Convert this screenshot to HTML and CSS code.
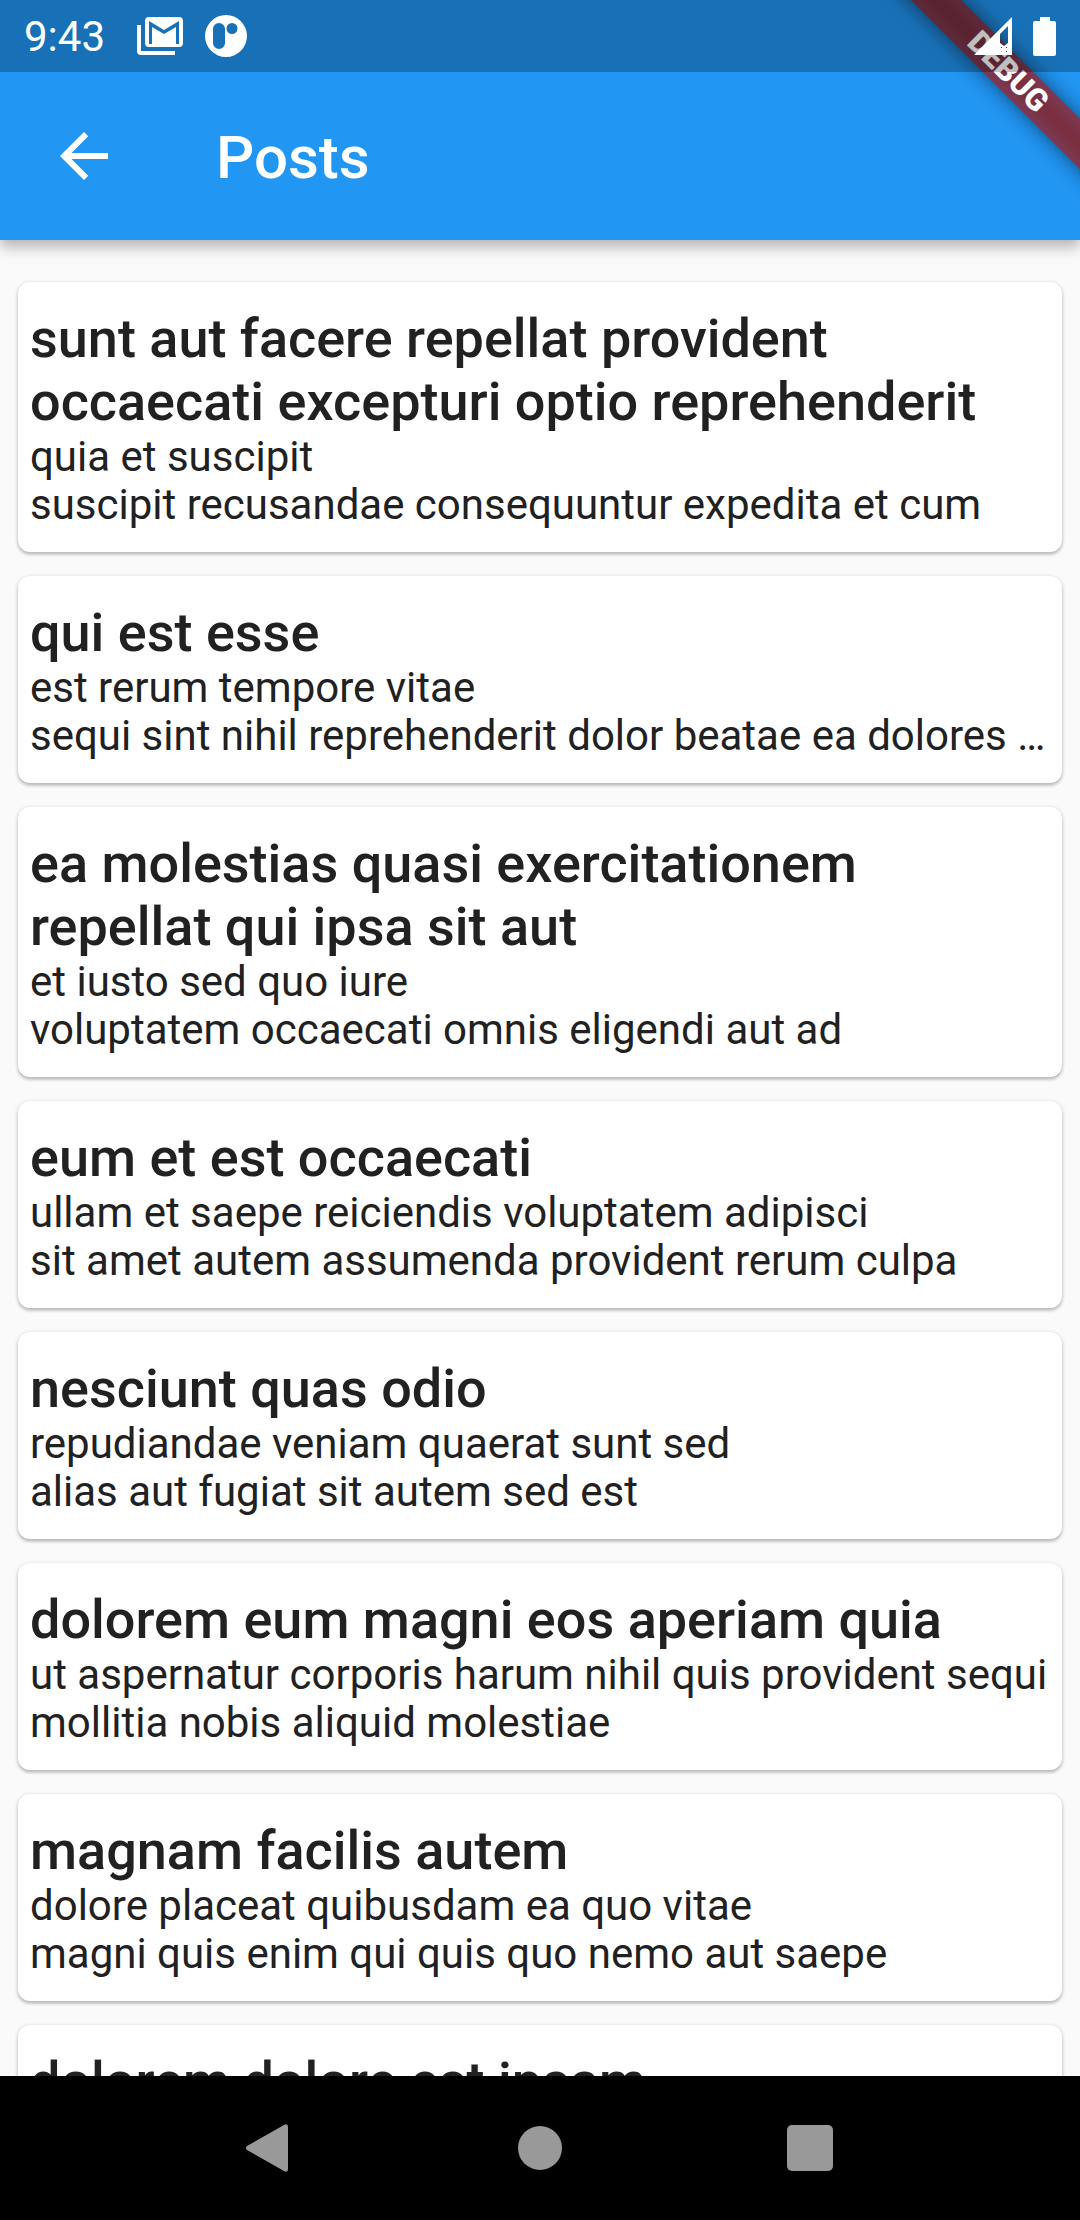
FILE: index.html
```html
<!DOCTYPE html>
<html lang="en">
<head>
<meta charset="utf-8">
<meta name="viewport" content="width=device-width, initial-scale=1">
<title>Posts</title>
<link rel="stylesheet" href="styles.css">
</head>
<body>
<div class="app">
  <header class="top">
    <div class="status-bar">
      <time class="clock">9:43</time>
      <svg class="mail-icon" viewBox="0 0 46 40" width="46" height="40" aria-hidden="true">
        <path fill="#fff" fill-rule="evenodd" d="M12 1h30a4 4 0 0 1 4 4v22a4 4 0 0 1-4 4H12a4 4 0 0 1-4-4V5a4 4 0 0 1 4-4zM12 5v23h3V11l12 7 12-7v17h3V5L27 14z"/>
        <path fill="#fff" d="M0 9h4v26h34v4H4a4 4 0 0 1-4-4z"/>
      </svg>
      <svg class="app-icon" viewBox="0 0 42 42" width="42" height="42" aria-hidden="true">
        <path fill="#fff" fill-rule="evenodd" d="M21 0a21 21 0 1 1 0 42a21 21 0 0 1 0-42zM14 8a6 6 0 0 0-6 6v14a6 6 0 0 0 12 0V14a6 6 0 0 0-6-6zM27 8a5 5 0 1 0 0 11a5 5 0 0 0 0-11z"/>
      </svg>
      <span class="spacer"></span>
      <svg class="signal-icon" viewBox="0 0 38 38" width="38" height="38" aria-hidden="true">
        <path fill="#fff" fill-rule="evenodd" d="M38 0v38H0zM34 9l-8 8v9l4 3 4-3zM27 30h1v1h-1zM32 30h1v1h-1zM27 34h1v1h-1zM32 34h1v1h-1z"/>
      </svg>
      <svg class="battery-icon" viewBox="0 0 24 39" width="24" height="39" aria-hidden="true">
        <path fill="#fff" d="M8 0h10v4h4a2 2 0 0 1 2 2v31a2 2 0 0 1-2 2H3a2 2 0 0 1-2-2V6a2 2 0 0 1 2-2h5z"/>
      </svg>
    </div>
    <div class="app-bar">
      <button class="back" type="button" aria-label="Back">
        <svg viewBox="0 0 24 24" width="72" height="72" aria-hidden="true"><path fill="#fff" d="M20 11H7.83l5.59-5.59L12 4l-8 8 8 8 1.41-1.41L7.83 13H20v-2z"/></svg>
      </button>
      <h1 class="title">Posts</h1>
    </div>
    <div class="banner-corner"><div class="banner">DEBUG</div></div>
  </header>
  <main class="list">
    <article class="card">
      <h2>sunt aut facere repellat provident occaecati excepturi optio reprehenderit</h2>
      <p>quia et suscipit<br>suscipit recusandae consequuntur expedita et cum</p>
    </article>
    <article class="card">
      <h2>qui est esse</h2>
      <p>est rerum tempore vitae<br>sequi sint nihil reprehenderit dolor beatae ea dolores …</p>
    </article>
    <article class="card">
      <h2>ea molestias quasi exercitationem repellat qui ipsa sit aut</h2>
      <p>et iusto sed quo iure<br>voluptatem occaecati omnis eligendi aut ad</p>
    </article>
    <article class="card">
      <h2>eum et est occaecati</h2>
      <p>ullam et saepe reiciendis voluptatem adipisci<br>sit amet autem assumenda provident rerum culpa</p>
    </article>
    <article class="card">
      <h2>nesciunt quas odio</h2>
      <p>repudiandae veniam quaerat sunt sed<br>alias aut fugiat sit autem sed est</p>
    </article>
    <article class="card">
      <h2>dolorem eum magni eos aperiam quia</h2>
      <p>ut aspernatur corporis harum nihil quis provident sequi<br>mollitia nobis aliquid molestiae</p>
    </article>
    <article class="card">
      <h2>magnam facilis autem</h2>
      <p>dolore placeat quibusdam ea quo vitae<br>magni quis enim qui quis quo nemo aut saepe</p>
    </article>
    <article class="card">
      <h2>dolorem dolore est ipsam</h2>
    </article>
  </main>
  <nav class="nav-bar" aria-label="System">
    <button type="button" aria-label="Back"><svg viewBox="0 0 48 48" width="48" height="48" aria-hidden="true"><path fill="#999" d="M1 22L38 1q4-2 4 2v42q0 4-4 2L1 26q-2-2 0-4z"/></svg></button>
    <button type="button" aria-label="Home"><svg viewBox="0 0 48 48" width="48" height="48" aria-hidden="true"><circle cx="24" cy="24" r="22" fill="#999"/></svg></button>
    <button type="button" aria-label="Recent apps"><svg viewBox="0 0 48 48" width="48" height="48" aria-hidden="true"><rect x="1" y="1" width="46" height="46" rx="5" fill="#999"/></svg></button>
  </nav>
</div>
</body>
</html>
```
FILE: styles.css
```css
* {
  box-sizing: border-box;
}

body {
  margin: 0;
  font-family: Roboto, "Liberation Sans", sans-serif;
  color: #212121;
  background: #fafafa;
}

h1,
h2,
p {
  margin: 0;
}

button {
  display: flex;
  align-items: center;
  justify-content: center;
  padding: 0;
  border: 0;
  background: none;
}

.app {
  display: flex;
  flex-direction: column;
  height: 100vh;
}

.top {
  position: relative;
  z-index: 1;
  flex: none;
  color: #fff;
  background: #2196f3;
  box-shadow: 0 6px 12px rgba(0, 0, 0, 0.2), 0 9px 15px rgba(0, 0, 0, 0.1);
}

.status-bar {
  position: relative;
  z-index: 2;
  display: flex;
  align-items: center;
  height: 72px;
  padding: 0 24px;
  background: rgba(0, 0, 0, 0.25);
}

.clock {
  padding-top: 2px;
  font-size: 42px;
  line-height: 48px;
}

.mail-icon {
  margin-left: 32px;
}

.app-icon {
  margin-left: 22px;
}

.spacer {
  flex: 1;
}

.battery-icon {
  margin-left: 20px;
}

.app-bar {
  display: flex;
  align-items: center;
  gap: 48px;
  height: 168px;
}

.back {
  width: 168px;
  height: 168px;
}

.title {
  padding-top: 4px;
  font-size: 60px;
  font-weight: 500;
  line-height: 72px;
}

.banner-corner {
  position: absolute;
  top: 0;
  right: 0;
  z-index: 1;
  width: 240px;
  height: 240px;
  overflow: hidden;
  pointer-events: none;
}

.banner {
  position: absolute;
  top: 54px;
  right: -108px;
  width: 360px;
  height: 36px;
  font-size: 31px;
  font-weight: 900;
  line-height: 36px;
  text-align: center;
  transform: rotate(45deg);
}

.banner::before,
.banner::after {
  content: "";
  position: absolute;
  inset: 0;
}

.banner::before {
  z-index: -2;
  background: rgba(0, 0, 0, 0.5);
  filter: blur(10px);
}

.banner::after {
  z-index: -1;
  background: rgba(183, 28, 28, 0.63);
}

.list {
  display: flex;
  flex: 1;
  flex-direction: column;
  gap: 24px;
  min-height: 0;
  padding: 42px 18px;
  overflow-y: auto;
  scrollbar-width: none;
}

.card {
  flex: none;
  padding: 25px 12px 23px;
  border-radius: 12px;
  background: #fff;
  box-shadow: 0 3px 3px rgba(0, 0, 0, 0.14), 0 1px 4px rgba(0, 0, 0, 0.2);
}

.card h2 {
  font-size: 54px;
  font-weight: 500;
  line-height: 63px;
}

.card p {
  font-size: 42px;
  line-height: 48px;
}

.nav-bar {
  display: flex;
  flex: none;
  align-items: center;
  justify-content: center;
  height: 144px;
  background: #000;
}

.nav-bar button {
  width: 25%;
  height: 144px;
}
```
